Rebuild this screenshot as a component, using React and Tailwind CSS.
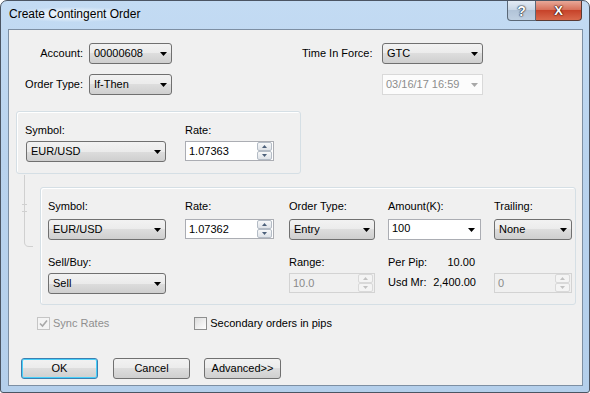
import React from "react";

const F = "font-['Liberation_Sans',Arial,sans-serif]";

function Arrow({ color = "#000" }) {
  return (
    <svg width="7" height="4" viewBox="0 0 7 4">
      <path d="M0 0H7L3.5 4Z" fill={color} />
    </svg>
  );
}

function Combo({ className = "", text }) {
  return (
    <div
      className={`flex h-[21px] items-center justify-between rounded-[3px] border border-[#707070] bg-[linear-gradient(#f2f2f2_0%,#ebebeb_50%,#dddddd_50%,#cfcfcf_100%)] pl-[4px] pr-[4px] text-black ${className}`}
    >
      <span>{text}</span>
      <Arrow />
    </div>
  );
}

function SpinBtn({ up, disabled }) {
  const c = disabled ? "#c2c2c2" : "#4c607a";
  return (
    <div
      className={`flex h-[9px] w-[15px] items-center justify-center rounded-[2px] border ${
        disabled
          ? "border-[#d9d9d9] bg-[#f4f4f4]"
          : "border-[#b4bcc6] bg-[linear-gradient(#f7f8f9,#dfe3e8)]"
      }`}
    >
      <svg width="5" height="3" viewBox="0 0 5 3">
        {up ? (
          <path d="M0 3H5L2.5 0Z" fill={c} />
        ) : (
          <path d="M0 0H5L2.5 3Z" fill={c} />
        )}
      </svg>
    </div>
  );
}

function Spin({ className = "", text, disabled }) {
  return (
    <div
      className={`flex h-[20px] items-center justify-between border pl-[3px] pr-[1px] ${
        disabled
          ? "border-[#d3d3d3] bg-[#f0f0f0] text-[#8a8a8a]"
          : "border-[#abadb3] bg-white text-black"
      } ${className}`}
    >
      <span>{text}</span>
      <div className="flex flex-col">
        <SpinBtn up disabled={disabled} />
        <SpinBtn disabled={disabled} />
      </div>
    </div>
  );
}

function Label({ className = "", children }) {
  return <div className={`h-[13px] leading-[13px] ${className}`}>{children}</div>;
}

function Check({ checked, disabled }) {
  return (
    <div
      className={`flex h-[13px] w-[13px] items-center justify-center border ${
        disabled
          ? "border-[#c5c5c5] bg-[#f4f4f4]"
          : "border-[#8e8f8f] bg-[linear-gradient(135deg,#dcdcdc,#ffffff)]"
      }`}
    >
      {checked && (
        <svg width="9" height="9" viewBox="0 0 9 9">
          <path d="M1 4.5L3.5 7L8 1.5" fill="none" stroke={disabled ? "#a8a8a8" : "#333"} strokeWidth="1.6" />
        </svg>
      )}
    </div>
  );
}

function Btn({ children, def, className = "" }) {
  return (
    <div
      className={`flex h-[21px] w-[77px] items-center justify-center rounded-[3px] border ${
        def
          ? "border-[#3c7fb1] shadow-[inset_0_0_0_1px_#48d0fa]"
          : "border-[#707070]"
      } bg-[linear-gradient(#f2f2f2_0%,#ebebeb_50%,#dddddd_50%,#cfcfcf_100%)] text-black ${className}`}
    >
      {children}
    </div>
  );
}

export default function App() {
  return (
    <div className={`${F} h-[393px] w-[590px] overflow-hidden bg-white`}>
      <div className="relative flex h-[393px] w-[590px] flex-col rounded-t-[7px] rounded-b-[3px] border border-[#4b5563] bg-[linear-gradient(180deg,#c3dbf3_0%,#b9d3ee_40%,#b4cfeb_100%)]">
        {/* Title bar */}
        <div className="flex h-[28px] items-start">
          <div className="ml-[6px] mt-[6px] rounded-full bg-[radial-gradient(ellipse_at_center,rgba(255,255,255,0.6)_30%,rgba(255,255,255,0)_72%)] px-[2px] text-[12px] leading-[15px] text-black">
            Create Contingent Order
          </div>
          <div className="ml-auto mr-[7px] flex">
            <div className="flex h-[20px] w-[29px] items-center justify-center rounded-bl-[4px] border border-t-0 border-[#5a6877] bg-[linear-gradient(#e3ebf4_0%,#c9d7e6_45%,#b2c4d8_50%,#bfd0e2_100%)]">
              <span className="text-[14px] font-bold leading-[14px] text-white [text-shadow:0_0_1px_#1e2a36,0_0_1px_#1e2a36,0_0_2px_#1e2a36]">?</span>
            </div>
            <div className="flex h-[20px] w-[46px] items-center justify-center rounded-br-[4px] border border-l-0 border-t-0 border-[#5a3a33] bg-[linear-gradient(#e8a898_0%,#d7725c_45%,#c7432a_50%,#d9694c_100%)]">
              <span className="text-[13px] font-bold leading-[13px] text-white [text-shadow:0_0_1px_#3b120a,0_0_1px_#3b120a,0_0_2px_#3b120a]">X</span>
            </div>
          </div>
        </div>

        {/* Content */}
        <div className="relative ml-[7px] h-[357px] w-[575px] border border-[#7d8fa3] bg-[#f0f0f0] text-[11px] leading-[13px] text-black">
          {/* connector bracket */}
          <svg className="absolute left-0 top-0" width="40" height="260" viewBox="0 0 40 260">
            <path d="M15.5 145V212Q15.5 216.5 20 216.5H24" fill="none" stroke="#d0d0d0" />
            <path d="M13 174.5H18M13 181.5H18M15.5 174.5V181.5" fill="none" stroke="#d0d0d0" />
          </svg>

          {/* Row 1 */}
          <div className="mt-[13px] flex items-center">
            <div className="w-[74px] text-right">Account:</div>
            <Combo className="ml-[6px] w-[83px]" text="00000608" />
            <div className="ml-[130px] w-[80px]">Time In Force:</div>
            <Combo className="w-[101px]" text="GTC" />
          </div>

          {/* Row 2 */}
          <div className="mt-[10px] flex items-center">
            <div className="w-[74px] text-right">Order Type:</div>
            <Combo className="ml-[6px] w-[83px]" text="If-Then" />
            <div className="ml-[210px] flex h-[21px] w-[101px] items-center justify-between border border-[#d9d9d9] bg-[#fcfcfc] pl-[3px] pr-[4px] text-[#8c8c8c]">
              <span>03/16/17 16:59</span>
              <Arrow color="#a8a8a8" />
            </div>
          </div>

          {/* Group 1 */}
          <div className="relative z-10 ml-[7px] mt-[16px] h-[63px] w-[285px] rounded-[3px] border border-[#d5dfe5] pl-[8px] pt-[12px] shadow-[inset_1px_1px_0_#fff]">
            <div className="flex">
              <div className="w-[141px]">
                <Label>Symbol:</Label>
                <Combo className="ml-[1px] mt-[4px] w-[140px]" text="EUR/USD" />
              </div>
              <div className="ml-[19px] w-[89px]">
                <Label>Rate:</Label>
                <Spin className="mt-[4px] w-[89px]" text="1.07363" />
              </div>
            </div>
          </div>

          {/* Group 2 */}
          <div className="ml-[31px] mt-[13px] h-[118px] w-[536px] rounded-[3px] border border-[#d5dfe5] pl-[7px] pt-[12px] shadow-[inset_1px_1px_0_#fff]">
            <div className="flex">
              <div className="w-[118px]">
                <Label>Symbol:</Label>
                <Combo className="mt-[6px] w-[118px]" text="EUR/USD" />
              </div>
              <div className="ml-[19px] w-[89px]">
                <Label>Rate:</Label>
                <Spin className="mt-[6px] w-[89px]" text="1.07362" />
              </div>
              <div className="ml-[15px] w-[86px]">
                <Label>Order Type:</Label>
                <Combo className="mt-[6px] w-[86px]" text="Entry" />
              </div>
              <div className="ml-[13px] w-[93px]">
                <Label>Amount(K):</Label>
                <div className="mt-[6px] flex h-[21px] w-[93px] items-start justify-between border border-[#abadb3] bg-white pl-[3px] pr-[5px] pt-[2px]">
                  <span>100</span>
                  <div className="mt-[6px]">
                    <Arrow />
                  </div>
                </div>
              </div>
              <div className="ml-[13px] w-[78px]">
                <Label>Trailing:</Label>
                <Combo className="mt-[6px] w-[78px]" text="None" />
              </div>
            </div>

            <div className="mt-[16px] flex">
              <div className="w-[118px]">
                <Label>Sell/Buy:</Label>
                <Combo className="mt-[4px] w-[118px]" text="Sell" />
              </div>
              <div className="ml-[19px] w-[89px]" />
              <div className="ml-[15px] w-[86px]">
                <Label>Range:</Label>
                <Spin className="mt-[4px] w-[86px]" text="10.0" disabled />
              </div>
              <div className="ml-[13px] w-[93px]">
                <div className="flex w-[87px] justify-between leading-[13px]">
                  <span>Per Pip:</span>
                  <span>10.00</span>
                </div>
                <div className="mt-[7px] flex w-[88px] justify-between leading-[13px]">
                  <span>Usd Mr:</span>
                  <span>2,400.00</span>
                </div>
              </div>
              <div className="ml-[13px] w-[78px] pt-[17px]">
                <Spin className="w-[78px]" text="0" disabled />
              </div>
            </div>
          </div>

          {/* Checkboxes */}
          <div className="mt-[12px] flex items-center">
            <div className="ml-[28px] flex items-center">
              <Check checked disabled />
              <span className="ml-[3px] text-[#8f8f8f]">Sync Rates</span>
            </div>
            <div className="ml-[85px] flex items-center">
              <Check />
              <span className="ml-[3px]">Secondary orders in pips</span>
            </div>
          </div>

          {/* Buttons */}
          <div className="ml-[12px] mt-[28px] flex">
            <Btn def>OK</Btn>
            <Btn className="ml-[15px]">Cancel</Btn>
            <Btn className="ml-[14px]">Advanced&gt;&gt;</Btn>
          </div>
        </div>
      </div>
    </div>
  );
}
